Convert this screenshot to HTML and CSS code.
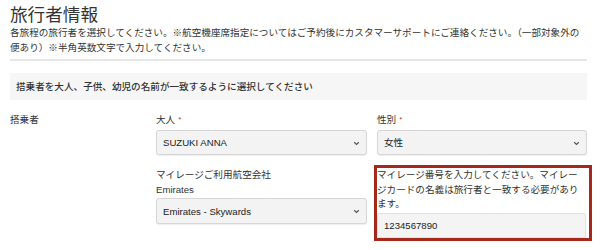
FILE: index.html
```html
<!DOCTYPE html>
<html lang="ja">
<head>
<meta charset="utf-8">
<link rel="stylesheet" href="styles.css">
</head>
<body>
<div class="page">
  <h1 class="title">旅行者情報</h1>
  <p class="lead">各旅程の旅行者を選択してください。※航空機座席指定についてはご予約後にカスタマーサポートにご連絡ください。（一部対象外の便あり）※半角英数文字で入力してください。</p>
  <div class="rule"></div>
  <div class="notice">搭乗者を大人、子供、幼児の名前が一致するように選択してください</div>
  <div class="passenger">
    <div class="side-label">搭乗者</div>
    <div class="fields">
      <div class="field">
        <div class="label">大人<span class="req">*</span></div>
        <div class="select-wrap">
          <select class="select"><option>SUZUKI ANNA</option></select>
          <svg class="chev" width="7" height="5" viewBox="0 0 7 5"><path d="M1.2 1.3 L3.5 3.5 L5.8 1.3" fill="none" stroke="#555" stroke-width="1.2"/></svg>
        </div>
      </div>
      <div class="field">
        <div class="label">性別<span class="req">*</span></div>
        <div class="select-wrap">
          <select class="select"><option>女性</option></select>
          <svg class="chev" width="7" height="5" viewBox="0 0 7 5"><path d="M1.2 1.3 L3.5 3.5 L5.8 1.3" fill="none" stroke="#555" stroke-width="1.2"/></svg>
        </div>
      </div>
      <div class="field airline">
        <div class="label">マイレージご利用航空会社</div>
        <div class="label">Emirates</div>
        <div class="select-wrap">
          <select class="select"><option>Emirates - Skywards</option></select>
          <svg class="chev" width="7" height="5" viewBox="0 0 7 5"><path d="M1.2 1.3 L3.5 3.5 L5.8 1.3" fill="none" stroke="#555" stroke-width="1.2"/></svg>
        </div>
      </div>
      <div class="field highlight">
        <div class="hint">マイレージ番号を入力してください。マイレージカードの名義は旅行者と一致する必要があります。</div>
        <input class="input" type="text" value="1234567890">
      </div>
    </div>
  </div>
</div>
</body>
</html>
```

FILE: styles.css
```css
html, body {
  margin: 0;
  padding: 0;
  background: #ffffff;
}
body {
  font-family: "Liberation Sans", "Noto Sans CJK JP", sans-serif;
  color: #333333;
  font-size: 9.6px;
}
.page {
  width: 577px;
  padding: 5px 0 0 10px;
}
.title {
  margin: 0;
  font-size: 17.6px;
  line-height: 20px;
  font-weight: 400;
  color: #333333;
}
.lead {
  margin: 0;
  font-size: 9.6px;
  line-height: 15.4px;
  color: #333333;
}
.rule {
  margin-top: 3px;
  height: 2px;
  background: #e6e6e6;
}
.notice {
  margin-top: 12px;
  height: 27px;
  line-height: 27px;
  background: #f6f6f6;
  padding-left: 6px;
  font-weight: 500;
  color: #333333;
}
.passenger {
  display: flex;
  margin-top: 13px;
}
.side-label {
  width: 146px;
  line-height: 14.4px;
  flex-shrink: 0;
}
.fields {
  display: grid;
  grid-template-columns: 211px 210px;
  column-gap: 10px;
  row-gap: 10px;
}
.label {
  line-height: 14.4px;
}
.airline {
  padding-top: 3px;
}
.req {
  color: #c23b2e;
  font-size: 8px;
  margin-left: 3px;
  position: relative;
  top: -1px;
}
.select-wrap {
  position: relative;
  margin-top: 2px;
}
.airline .select-wrap {
  margin-top: 1px;
}
.select {
  -webkit-appearance: none;
  appearance: none;
  display: block;
  width: 100%;
  height: 25px;
  margin: 0;
  padding: 0 0 0 6px;
  border: 1px solid #d6d6d6;
  border-radius: 3px;
  background: #f3f3f3;
  box-shadow: 0 1px 1px rgba(0, 0, 0, 0.07);
  font-family: "Liberation Sans", "Noto Sans CJK JP", sans-serif;
  font-size: 9.6px;
  color: #222222;
}
.airline .select {
  height: 26px;
}
.chev {
  position: absolute;
  right: 7px;
  top: 50%;
  margin-top: -2px;
}
.highlight {
  border: 3px solid #a5281d;
  margin-left: -3px;
  margin-right: -5px;
  padding-right: 3px;
}
.hint {
  line-height: 14.4px;
  color: #333333;
}
.input {
  display: block;
  box-sizing: border-box;
  width: 100%;
  height: 25px;
  margin: 2px 0 0 0;
  padding: 0 0 0 6px;
  border: 1px solid #e2e2e2;
  border-radius: 2px;
  background: #f4f4f4;
  font-family: "Liberation Sans", "Noto Sans CJK JP", sans-serif;
  font-size: 9.6px;
  color: #222222;
  outline: none;
}
```
